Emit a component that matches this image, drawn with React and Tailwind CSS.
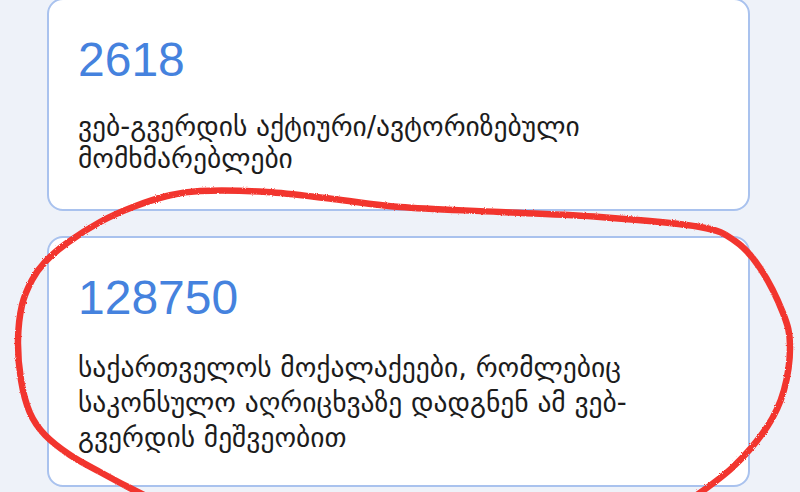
import React from "react";

// Hand-drawn marker loop around the second card, as a list of points
const LOOP = [
  [150, 498], [128, 487], [100, 472], [70, 455], [45, 435], [30, 413],
  [21, 380], [18, 340], [22, 305], [32, 280], [45, 262], [67, 243],
  [100, 222], [133, 207], [167, 196], [200, 191], [267, 192], [333, 199],
  [400, 207], [500, 212], [600, 217], [700, 227], [735, 241], [760, 268],
  [783, 313], [790, 345], [784, 390], [767, 427], [733, 467], [693, 498],
];

// Catmull-Rom through the points, written out as cubic Bézier segments
function smoothPath(pts) {
  let d = `M${pts[0][0]},${pts[0][1]}`;
  for (let i = 0; i < pts.length - 1; i++) {
    const p0 = pts[i - 1] || pts[i];
    const p1 = pts[i];
    const p2 = pts[i + 1];
    const p3 = pts[i + 2] || p2;
    const c1 = [p1[0] + (p2[0] - p0[0]) / 6, p1[1] + (p2[1] - p0[1]) / 6];
    const c2 = [p2[0] - (p3[0] - p1[0]) / 6, p2[1] - (p3[1] - p1[1]) / 6];
    d += ` C${c1[0].toFixed(1)},${c1[1].toFixed(1)} ${c2[0].toFixed(1)},${c2[1].toFixed(1)} ${p2[0]},${p2[1]}`;
  }
  return d;
}

const LOOP_PATH = smoothPath(LOOP);

function StatCard({ value, label, height, labelClass }) {
  return (
    <div
      className={`w-[703px] ${height} rounded-[16px] border-2 border-[#a9c2ee] bg-white pt-[36px] pl-[29px] pr-[26px]`}
    >
      <div
        className="text-[48px] leading-[48px] text-[#4582de]"
        style={{ fontFamily: '"Liberation Sans", Arial, sans-serif' }}
      >
        {value}
      </div>
      <p
        className={`${labelClass} text-[27.5px] text-[#1c1c1c]`}
        style={{ fontFamily: '"DejaVu Sans", "Noto Sans", sans-serif' }}
      >
        {label}
      </p>
    </div>
  );
}

export default function App() {
  return (
    <div className="relative h-[492px] w-full overflow-hidden bg-[#eef2f9]">
      <div className="-mt-[2px] flex flex-col gap-[25px] pl-[47px]">
        <StatCard
          value="2618"
          label="ვებ-გვერდის აქტიური/ავტორიზებული მომხმარებლები"
          height="h-[213px]"
          labelClass="mt-[26px] leading-[32px]"
        />
        <StatCard
          value="128750"
          label="საქართველოს მოქალაქეები, რომლებიც საკონსულო აღრიცხვაზე დადგნენ ამ ვებ-გვერდის მეშვეობით"
          height="h-[251px]"
          labelClass="mt-[28px] leading-[35px]"
        />
      </div>

      <svg
        className="pointer-events-none absolute inset-0"
        width="800"
        height="492"
        viewBox="0 0 800 492"
      >
        <defs>
          <filter id="marker-rough" x="-5%" y="-5%" width="110%" height="110%">
            <feTurbulence type="fractalNoise" baseFrequency="0.9" numOctaves="2" seed="4" result="noise" />
            <feDisplacementMap in="SourceGraphic" in2="noise" scale="2.5" />
          </filter>
        </defs>
        <path
          d={LOOP_PATH}
          fill="none"
          stroke="#f2362f"
          strokeWidth="6.5"
          strokeLinecap="round"
          strokeLinejoin="round"
          filter="url(#marker-rough)"
        />
      </svg>
    </div>
  );
}
